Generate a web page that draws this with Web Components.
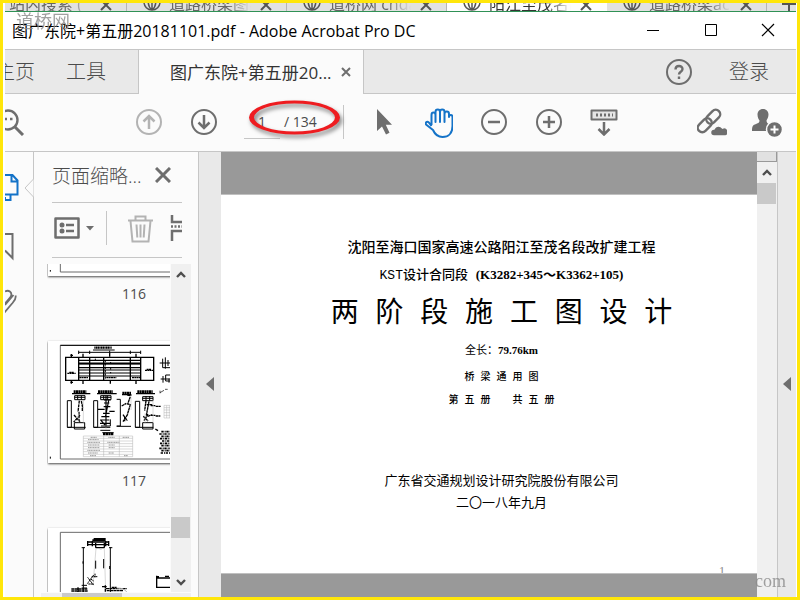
<!DOCTYPE html>
<html lang="zh-CN">
<head>
<meta charset="utf-8">
<title>图广东院+第五册20181101.pdf - Adobe Acrobat Pro DC</title>
<style>
    body {
        margin: 0;
        font-family: "Open Sans", "Noto Sans CJK SC", sans-serif;
        font-size: 16px;
        color: #4b4b4b;
    }
</style>
</head>
<body>
<acrobat-window></acrobat-window>

<script>
function define(name, html, setup) {
    const template = document.createElement("template")
    template.innerHTML = html

    customElements.define(name, class extends HTMLElement {
        constructor() {
            super()
            const shadow = this.attachShadow({mode: "open"})
            shadow.append(template.content.cloneNode(true))
        }

        connectedCallback() {
            if (setup) setup(this, this.shadowRoot)
        }
    })
}

define("icon-button", `
<style>
    :host {
        display: block;
        flex: none;
        width: 28px;
        height: 28px;
        color: #6e6e6e;
    }

    :host([active]) {
        color: #1473c8;
    }

    :host([dim]) {
        color: #b3b3b3;
    }

    button {
        display: block;
        width: 100%;
        height: 100%;
        padding: 0;
        border: 0;
        background: none;
        color: inherit;
    }

    ::slotted(svg) {
        display: block;
        margin: auto;
        fill: none;
        stroke: currentColor;
        stroke-width: 2;
    }
</style>
<button type="button"><slot></slot></button>`, (host, shadow) => {
    shadow.querySelector("button").setAttribute("aria-label", host.getAttribute("label"))
})

define("browser-tab", `
<style>
    :host {
        display: flex;
        flex: none;
        align-items: flex-end;
        box-sizing: border-box;
        width: 160px;
        padding-left: 16px;
        border-right: 1px solid #b5b5b5;
        color: #666;
        line-height: 14px;
        font-size: 16px;
    }

    :host([active]) {
        background: #fdfdfd;
        border-color: #fdfdfd;
        color: #333;
    }

    .globe {
        flex: none;
        width: 18px;
        height: 18px;
        margin-right: 8px;
    }

    .title {
        width: 82px;
        height: 14px;
        white-space: nowrap;
        -webkit-mask-image: linear-gradient(90deg, #000 70%, transparent);
        mask-image: linear-gradient(90deg, #000 70%, transparent);
    }

    .close {
        flex: none;
        width: 12px;
        height: 12px;
        margin-left: 9px;
    }

    svg {
        fill: none;
        stroke: #555;
        stroke-width: 2;
    }
</style>
<svg class="globe" viewBox="0 0 18 18"><path d="M9 1a8 8 0 1 0 0 16a8 8 0 0 0 0-16zM9 1v16M1 9h16M9 1c-5 4-5 12 0 16M9 1c5 4 5 12 0 16" stroke-width="1.5"/></svg>
<span class="title"><slot></slot></span>
<svg class="close" viewBox="0 0 12 12"><path d="M1 1l10 10M11 1L1 11"/></svg>`)

define("browser-strip", `
<style>
    :host {
        display: flex;
        align-items: flex-end;
        height: 8px;
        overflow: hidden;
        background: #e1e1e1;
        border-bottom: 1px solid #2f9155;
    }

    .tabs {
        display: flex;
        flex: 1;
        margin-left: -38px;
    }

    svg {
        flex: none;
        width: 14px;
        height: 14px;
        margin: 4px 0 0 15px;
    }
</style>
<div class="tabs">
    <browser-tab>站内搜索 (</browser-tab>
    <browser-tab>道路桥梁图纸</browser-tab>
    <browser-tab>道桥网 cnda</browser-tab>
    <browser-tab active>阳江至茂名高</browser-tab>
    <browser-tab>道路桥梁ac</browser-tab>
    <svg viewBox="0 0 14 14"><path d="M7 0v14M0 7h14" stroke="#555" stroke-width="2"/></svg>
</div>`)

define("title-bar", `
<style>
    :host {
        display: flex;
        align-items: center;
        height: 35px;
        padding-bottom: 2px;
        background: #fff;
        border-bottom: 1px solid #c6c6c6;
        color: #000;
    }

    h1 {
        flex: 1;
        margin: 0;
        padding-left: 7px;
        font-size: 16px;
        font-weight: 400;
        white-space: nowrap;
    }

    icon-button {
        width: 58px;
        color: #000;
    }

    icon-button:last-child {
        width: 56px;
    }

    svg {
        width: 14px;
        height: 14px;
    }
</style>
<h1><slot></slot></h1>
<icon-button label="最小化"><svg viewBox="0 0 14 14"><path d="M1 7.5h12" stroke-width="1"/></svg></icon-button>
<icon-button label="最大化"><svg viewBox="0 0 14 14"><path d="M1.500 1.500h11v11h-11z" stroke-width="1"/></svg></icon-button>
<icon-button label="关闭"><svg viewBox="0 0 14 14"><path d="M1 1l12 12M13 1L1 13" stroke-width="1.2"/></svg></icon-button>`)

define("tab-bar", `
<style>
    :host {
        display: flex;
        height: 44px;
        background: #e9e9e9;
        font-size: 20px;
        font-weight: 300;
        line-height: 43px;
    }

    a {
        color: #4b4b4b;
        text-decoration: none;
        white-space: nowrap;
    }

    nav {
        display: flex;
        gap: 31px;
        box-sizing: border-box;
        width: 133px;
        overflow: hidden;
        border-bottom: 1px solid #c6c6c6;
    }

    nav a:first-child {
        margin-left: -10px;
    }

    .tab {
        display: flex;
        align-items: center;
        box-sizing: border-box;
        width: 226px;
        padding-left: 31px;
        background: #fbfbfb;
        border: solid #c6c6c6;
        border-width: 0 1px;
        font-size: 17px;
        font-weight: 400;
    }

    .tab a {
        color: #333;
    }

    .rest {
        display: flex;
        flex: 1;
        align-items: center;
        justify-content: flex-end;
        gap: 36px;
        padding-right: 27px;
        border-bottom: 1px solid #c6c6c6;
    }
</style>
<nav><a href="#home">主页</a><a href="#tools">工具</a></nav>
<div class="tab">
    <a href="#file">图广东院+第五册20...</a>
    <icon-button label="关闭标签"><svg width="10" height="10" viewBox="0 0 10 10"><path d="M1 1l8 8M9 1L1 9"/></svg></icon-button>
</div>
<div class="rest">
    <icon-button label="帮助"><svg width="28" height="28" viewBox="0 0 28 28"><circle cx="14" cy="14" r="12"/><path d="M10.500 11.500c0-4.500 7-4.500 7-.5c0 3-3.500 2.500-3.500 5.500M14 18.500v2.500" stroke-width="2.400"/></svg></icon-button>
    <a href="#login">登录</a>
</div>`)

define("page-number", `
<style>
    :host {
        position: relative;
        display: flex;
        align-items: flex-end;
        height: 34px;
        width: 99px;
        border-right: 1px solid #c6c6c6;
        font-size: 14px;
        line-height: 20px;
    }

    input {
        box-sizing: border-box;
        width: 36px;
        height: 34px;
        padding: 0;
        border: 0;
        border-bottom: 1px solid #c6c6c6;
        background: none;
        color: inherit;
        font: inherit;
        text-align: center;
    }

    label {
        padding: 0 0 7px 4px;
        white-space: pre;
    }

    svg {
        position: absolute;
        left: 4px;
        top: -6px;
        pointer-events: none;
        filter: drop-shadow(2px 3px 2px rgba(0, 0, 0, .5));
    }
</style>
<input id="page" value="1">
<label for="page">/ 134</label>
<svg width="94" height="38" viewBox="0 0 94 38"><path fill="#ee1c20" fill-rule="evenodd" d="M1 18.500a45.500 17 0 1 1 91 0a45.500 17 0 1 1-91 0zM6 18.500a40.500 14 0 1 0 81 0a40.500 14 0 1 0-81 0z"/></svg>`)

define("tool-bar", `
<style>
    :host {
        display: flex;
        align-items: center;
        height: 55px;
        padding: 0 16px 2px 0;
        background: #fbfbfb;
        border-bottom: 1px solid #c6c6c6;
    }

    .group {
        display: flex;
        align-items: center;
        gap: 27px;
    }

    .nav {
        margin: 0 26px 0 102px;
    }

    .view {
        flex: 1;
        margin-left: 26px;
    }
</style>
<icon-button label="查找"><svg width="28" height="28" viewBox="0 0 28 28"><circle cx="3" cy="12" r="9.500" stroke-width="2.400"/><path d="M10 19l8 8" stroke-width="3"/><path d="M0 11h2M5 11h2.500" stroke-width="2.500"/></svg></icon-button>
<div class="group nav">
    <icon-button dim label="上一页"><svg width="28" height="28" viewBox="0 0 28 28"><circle cx="14" cy="14" r="12"/><path d="M14 21V8M8.500 13.500L14 8l5.500 5.500" stroke-width="2.500"/></svg></icon-button>
    <icon-button label="下一页"><svg width="28" height="28" viewBox="0 0 28 28"><circle cx="14" cy="14" r="12"/><path d="M14 7v13M8.500 14.500L14 20l5.500-5.500" stroke-width="2.500"/></svg></icon-button>
</div>
<page-number></page-number>
<div class="group view">
    <icon-button label="选择工具"><svg width="28" height="28" viewBox="0 0 28 28"><path d="M7 1v22l5-4.500l4 8l3.500-1.700l-3.700-8H22z" fill="currentColor" stroke="none"/></svg></icon-button>
    <icon-button active label="抓手工具"><svg width="28" height="30" viewBox="0 0 28 30"><path d="M6.500 17V7c0-3.200 4-3.200 4 0v7V4c0-3.200 4.500-3.200 4.500 0v10V4c0-3.200 4.500-3.200 4.500 0v10V6c0-3.200 4.500-3.200 4.500 0v3c0-2.600 3.500-2.600 3.500 0v9c0 7-4 11-10 11c-5 0-7.500-2.500-9.500-7L1 16.500c-1-2.500 1.800-3.600 3.200-1.600L6.500 18" stroke-linejoin="round"/></svg></icon-button>
    <icon-button label="缩小"><svg width="28" height="28" viewBox="0 0 28 28"><circle cx="14" cy="14" r="12"/><path d="M8 14h12" stroke-width="2.500"/></svg></icon-button>
    <icon-button label="放大"><svg width="28" height="28" viewBox="0 0 28 28"><circle cx="14" cy="14" r="12"/><path d="M8 14h12M14 8v12" stroke-width="2.500"/></svg></icon-button>
    <icon-button label="滚动"><svg width="28" height="28" viewBox="0 0 28 28"><path d="M1.500 2.500h25v9h-25z" fill="#e4e4e4" stroke-linejoin="round"/><path d="M6 7h2M10 7h2M14 7h2M18 7h2M22 7h1" stroke-width="3"/><path d="M14 14v12M8.500 21l5.500 5.500l5.500-5.500" stroke-width="2.500"/></svg></icon-button>
</div>
<div class="group">
    <icon-button label="共享链接"><svg width="30" height="28" viewBox="0 0 30 28"><g transform="rotate(-45 12 13)" stroke-width="2.400"><rect x="10" y="8.500" width="16" height="9" rx="4.500"/><rect x="-2" y="8.500" width="16" height="9" rx="4.500"/></g><path d="M17 28a3.500 3.500 0 0 1 0-7a5 5 0 0 1 8.500-1a4 4 0 0 1 3 8z" fill="currentColor" stroke="#fbfbfb" stroke-width="1.500"/></svg></icon-button>
    <icon-button label="添加人员"><svg width="30" height="30" viewBox="0 0 30 30"><path d="M11 1c3.500 0 5.500 2.500 5.500 5.500c0 3-1.500 5-2 6c0 2 1 3 3.500 4v6.500H0c0-5 1-6 4-7c2.500-1 3.500-1.500 3.500-3.500c-.8-1-2-3-2-6C5.500 3.500 7.500 1 11 1z" fill="currentColor" stroke="none"/><circle cx="22.500" cy="21.500" r="8" fill="currentColor" stroke="#fbfbfb" stroke-width="1.500"/><path d="M18.500 21.500h8M22.500 17.500v8" stroke="#fff"/></svg></icon-button>
</div>`)

define("side-rail", `
<style>
    :host {
        position: relative;
        display: flex;
        flex: none;
        flex-direction: column;
        gap: 28px;
        box-sizing: border-box;
        width: 29px;
        padding-top: 21px;
        background: #fbfbfb;
        border-right: 1px solid #c6c6c6;
    }

    icon-button {
        height: 30px;
    }

    .notch {
        position: absolute;
        right: -1px;
        top: 27px;
    }
</style>
<icon-button active label="页面缩略图"><svg width="28" height="30" viewBox="0 0 28 30"><path d="M-3 2H7.500L12.500 7.500V21.500H-3M6.500 2v6.500h6M5.500 22v5H0M0 24v4"/></svg></icon-button>
<icon-button label="书签"><svg width="28" height="30" viewBox="0 0 28 30"><path d="M0 3h7.500v24L0 19.500"/></svg></icon-button>
<icon-button label="附件"><svg width="28" height="30" viewBox="0 0 28 30"><path d="M0 2.500c3.500-2 7.500.5 6 4.500c-.5 1.500-2 3-6 7.500M10.500 6.500c1 3-1 5-3 7.500L-1 24M8.500 6L0 16" stroke-width="1.800"/></svg></icon-button>
<svg class="notch" width="10" height="18" viewBox="0 0 10 18"><path d="M9.500 0L1 9l8.500 9" fill="#fbfbfb" stroke="#c6c6c6"/></svg>`)

define("scroll-bar", `
<style>
    :host {
        display: flex;
        flex: none;
        flex-direction: column;
        width: 20px;
        background: #f0f0f0;
        overflow: hidden;
    }

    icon-button {
        width: 20px;
        height: 21px;
        color: #4e4e4e;
    }

    .track {
        display: flex;
        flex: 1;
        flex-direction: column;
    }

    .track::before {
        content: "";
        flex: var(--before, 0);
    }

    .track::after {
        content: "";
        flex: 1;
    }

    .thumb {
        height: 21px;
        margin-right: 1px;
        background: #c9c9c9;
    }

    :host([cut]) .down {
        display: none;
    }
</style>
<slot></slot>
<icon-button label="向上滚动"><svg width="12" height="12" viewBox="0 0 12 12"><path d="M2 8l4-4l4 4" stroke-width="2.400"/></svg></icon-button>
<div class="track"><div class="thumb"></div></div>
<icon-button class="down" label="向下滚动"><svg width="12" height="12" viewBox="0 0 12 12"><path d="M2 4l4 4l4-4" stroke-width="2.400"/></svg></icon-button>`)

define("page-thumb", `
<style>
    :host {
        display: block;
        height: 187px;
        text-align: center;
        font-size: 14px;
        line-height: 20px;
    }

    .sheet {
        height: 122px;
        margin-bottom: 8px;
        background: #fff;
        box-shadow: 0 1px 2px rgba(0, 0, 0, .7);
    }

    ::slotted(svg) {
        display: block;
        width: 172px;
        height: 122px;
    }
</style>
<div class="sheet"><slot></slot></div>
<span></span>`, (host, shadow) => {
    shadow.querySelector("span").textContent = host.getAttribute("number")
})

// the drawings use three units to the pixel
define("thumb-list", `
<style>
    :host {
        display: flex;
        flex: 1;
        min-height: 0;
        margin: 0 7px 0 13px;
    }

    .view {
        flex: 1;
        overflow: hidden;
        padding-left: 1px;
        margin-right: 1px;
    }

    .pages {
        width: 172px;
        margin-top: -110px;
    }

    scroll-bar {
        --before: 7;
    }

    .line {
        fill: none;
        stroke: #000;
        stroke-width: 3;
    }

    .frame {
        fill: none;
        stroke: #6a6a6a;
        stroke-width: 3;
    }

    .faint {
        fill: none;
        stroke: #b0b0b0;
        stroke-width: 1.500;
    }
</style>
<div class="view">
    <div class="pages">
        <page-thumb number="116">
            <svg viewBox="144 123 516 366"><path class="frame" d="M181 136H640V477H181z"/><path class="line" d="M151 471v5"/></svg>
        </page-thumb>
        <page-thumb number="117">
            <svg viewBox="144 123 516 366">
                <path class="frame" d="M181 136H640V477H181z"/>
                <path class="line" d="M181 136H640M151 470v6"/>
                <path class="line" stroke-dasharray="4 1" style="stroke-width:7" d="M283 143h52"/>
                <path class="line" d="M279 150h65M236 157h186M236 152v10M269 152v10M391 152v10M422 152v10M329 152v10"/>
                <path class="line" d="M197 172H461V241H197zM236 172v69M269 172v69M311 172v69M391 172v69M422 172v69" style="stroke-width:4"/>
                <path class="line" d="M236 181H422M236 192H422M236 203H422M236 210H422M236 219H422M236 228H422" style="stroke-width:3.500"/>
                <path class="line" d="M236 190H422" style="stroke-width:5"/>
                <path class="line" d="M316 180v56M332 186v6M332 204v5M332 216v4M286 176v8" stroke-dasharray="7 3"/>
                <path class="line" d="M202 220h25M208 217h14M435 211h24M440 208h14M238 233h26M319 233h30M396 233h24" stroke-dasharray="6 1" style="stroke-width:4"/>
                <path class="line" d="M214 162v9M211 166h8M249 161v10M408 161v10M329 160v10M214 241v10M211 247h8M249 242v10M408 242v10M331 242v9" style="stroke-width:4"/>
                <path class="line" d="M479 189h32M488 176v27M496 172v34M488 203h22M504 180v18M482 237h29M489 228v20M497 225v18h14M497 225h14M507 236v12" style="stroke-width:3"/>
                <path class="line" d="M480 272v8M480 278l12-7M495 268h8" style="stroke-width:2"/>
                <path class="line" d="M216 281h55M291 281h59M366 284h28M408 281h57" style="stroke-width:4"/>
                <path class="line" d="M221 275h38M294 275h44M367 279h26M412 275h46" stroke-dasharray="6 1" style="stroke-width:8"/>
                <path class="line" d="M224 287v12h31v-12zM302 287v12h31v-12zM428 290v12h31v-12zM224 292h31M302 292h31M428 295h31M233 287v12M244 287v12M311 287v12M323 287v12M438 288v14M449 288v14"/>
                <path class="line" d="M202 302h12v80h-12zM281 302h12v80h-12zM350 298h11v80h-11M406 304h13v78h-13z"/>
                <path class="line" d="M202 382h55M223 368h31v19h-31zM281 382h50M303 378h28v-20M350 379h43M406 382h54M428 368h31v19h-31z"/>
                <path class="line" d="M238 302l-4 34M247 313v22M237 335v28M222 345l18 20M240 346l-19 20M244 303l4 20" stroke-dasharray="9 2" style="stroke-width:4"/>
                <path class="line" d="M318 287v94M312 300h20M312 309h16M311 320h20M294 328h20M328 334h16M309 340h20M304 350h24M302 360h26M300 370h30M326 302l-10 50M301 359l14 16" style="stroke-width:3.500"/>
                <path class="line" d="M391 290l-8 22l8 2l-9 30M365 318l14-8M369 344l13 18M383 343l-14 22M374 350v14M382 286h12" stroke-dasharray="9 1" style="stroke-width:4"/>
                <path class="line" d="M438 302l-4 30M447 304l-8 42M430 349l14 14M444 342l-12 20M440 314h17M443 349l14-5M467 319h15M467 348h14M452 346h14M452 317h14" stroke-dasharray="8 1" style="stroke-width:4"/>
                <path class="faint" d="M235 337v30M250 300v72M318 375v13M435 340v30M459 300v70M393 290v40"/>
                <path class="line" d="M301 391h30M307 398h34" style="stroke-width:3"/>
                <path class="line" d="M309 402h32" stroke-dasharray="7 1" style="stroke-width:8"/>
                <path class="faint" d="M250 408H398V470H250zM311 408v62M358 408v62M250 415H398M250 423H398M250 431H398M250 439H398M250 447H398M250 455H398M250 463H398"/>
                <path class="frame" d="M272 412h18M325 412h20M368 412h20M264 419h32M262 427h38M264 435h34M264 443h34M262 451h38M264 459h30M270 467h18M322 427h36M326 435h18M326 443h18M326 459h16M372 467h12" stroke-dasharray="4 1" style="stroke-width:2"/>
                <path class="faint" d="M492 316h30v38h-30zM492 323h30M492 330h30M492 338h30M492 346h30M500 316v38M508 316v38"/>
                <path class="line" d="M484 395h40M478 402h44M484 409h38M480 416h42M486 423h38M480 430h42M484 437h40M478 445h44M484 452h38M482 459h40" stroke-dasharray="7 3 3 2" style="stroke-width:5"/>
                <path class="line" d="M466 387l8 5" style="stroke-width:4"/>
            </svg>
        </page-thumb>
        <page-thumb number="118">
            <svg viewBox="144 204 516 366">
                <path class="frame" d="M181 217H640V558H181z"/>
                <path class="line" d="M281 237h36M277 241h40" style="stroke-width:6"/>
                <path class="line" d="M262 246h64M262 254h64M263 243v15M326 243v15M277 243v16M317 243v16M287 249v14M313 249v14M287 263h26" style="stroke-width:4"/>
                <path class="line" d="M250 262v134M245 263h10M331 262v134M327 263h10M245 376h16M245 384h16"/>
                <path class="faint" d="M288 265l-9 110M313 265l4 130M297 264l5 6l6-6"/>
                <path class="line" d="M287 302v24M311 297v28M249 304v7M329 318v9" style="stroke-width:3"/>
                <path class="line" d="M263 352l18 24M281 345l-19 26M272 357l9 6M285 341v12M265 372h16M275 350h18" style="stroke-width:3" stroke-dasharray="5 1"/>
                <path class="line" d="M214 387h48M214 393h50M234 382v14M316 376v20M306 380h14M318 386h62M335 382h15M320 392h50" style="stroke-width:4" stroke-dasharray="9 1"/>
                <path class="faint" d="M350 384c15 0 26 4 30 12M230 400h60" style="stroke-width:3"/>
                <path class="line" d="M469 354h50M470 347v35h49M469 350h8M495 349h12" style="stroke-width:4"/>
            </svg>
        </page-thumb>
    </div>
</div>
<scroll-bar></scroll-bar>`)

define("thumbs-pane", `
<style>
    :host {
        display: flex;
        flex: none;
        flex-direction: column;
        box-sizing: border-box;
        width: 165px;
        background: #fbfbfb;
        border-right: 1px solid #c6c6c6;
    }

    header, .tools {
        display: flex;
        align-items: center;
        flex: none;
        margin: 0 16px 0 18px;
        padding-bottom: 4px;
        border-bottom: 1px solid #c6c6c6;
        overflow: hidden;
    }

    header {
        height: 46px;
        justify-content: space-between;
    }

    h2 {
        margin: 0;
        font-size: 19px;
        font-weight: 300;
        white-space: nowrap;
    }

    header icon-button {
        margin-right: 5px;
    }

    .tools {
        height: 50px;
        margin-bottom: 6px;
    }

    .options {
        width: 44px;
    }

    .delete {
        box-sizing: border-box;
        height: 34px;
        width: 54px;
        margin-left: 10px;
        padding: 2px 0 0 14px;
        border-left: 1px solid #c6c6c6;
    }

    .insert {
        margin-left: 10px;
    }

    .across {
        height: 4px;
        margin: 1px 7px 0;
        background: #f0f0f0;
    }

    .across div {
        width: 60px;
        height: 4px;
        margin-left: 21px;
        background: #c9c9c9;
    }
</style>
<header>
    <h2>页面缩略...</h2>
    <icon-button label="关闭面板"><svg width="16" height="16" viewBox="0 0 16 16"><path d="M1 1l14 14M15 1L1 15" stroke-width="3"/></svg></icon-button>
</header>
<div class="tools">
    <icon-button class="options" label="选项"><svg width="44" height="28" viewBox="0 0 44 28"><path d="M3.500 4.500h23v19h-23z" stroke-width="2.500" stroke-linejoin="round"/><path d="M14 11h8M14 17h8" stroke-width="2.400"/><circle cx="10" cy="11" r="2.500" fill="currentColor" stroke="none"/><circle cx="10" cy="17" r="2.500" fill="currentColor" stroke="none"/><path d="M34 12h8l-4 4.500z" fill="currentColor" stroke="none"/></svg></icon-button>
    <icon-button dim class="delete" label="删除页面"><svg width="28" height="28" viewBox="0 0 28 28"><path d="M1 5.500h25M8.500 5V1.500h10V5M3.500 6l2 20.500h16l2-20.500"/><path d="M9.500 9.500l.8 13M13.500 9.500v13M17.500 9.500l-.8 13"/></svg></icon-button>
    <icon-button class="insert" label="插入页面"><svg width="28" height="28" viewBox="0 0 28 28"><path d="M2 1v7h26M2 27V17h26" stroke-width="2.500"/><path d="M1 12.500h26" stroke-width="2.500" stroke-dasharray="2 1.500"/></svg></icon-button>
</div>
<thumb-list></thumb-list>
<div class="across"><div></div></div>`)

define("pane-toggle", `
<style>
    :host {
        display: flex;
        flex: none;
        align-items: center;
        justify-content: center;
        box-sizing: border-box;
        width: 22px;
        padding-top: 18px;
        background: #e9e9e9;
    }

    :host([last]) {
        width: 19px;
        border-left: 1px solid #c6c6c6;
    }

    icon-button {
        width: 100%;
    }
</style>
<icon-button label="显示或隐藏面板"><svg width="8" height="14" viewBox="0 0 8 14"><path d="M8 0v14L0 7z" fill="currentColor" stroke="none"/></svg></icon-button>`)

define("document-page", `
<style>
    :host {
        position: relative;
        display: flex;
        flex: 1;
        flex-direction: column;
        align-items: center;
        min-height: 0;
        padding-left: 25px;
        background: #fff;
        border: solid #c0c0c0;
        border-width: 1px 0;
        color: #000;
        font-family: "Liberation Mono", "Noto Sans CJK SC", monospace;
        overflow: hidden;
        white-space: pre;
    }

    p, h1 {
        margin: 0;
        font-size: 13px;
        font-weight: 400;
        line-height: 20px;
    }

    b {
        font-family: "Liberation Serif", "Noto Sans CJK SC", serif;
    }

    .project, .section {
        font-weight: 500;
    }

    .project {
        margin-top: 43px;
        font-size: 14px;
    }

    .section {
        margin-top: 7px;
    }

    h1 {
        margin: 8px 0 4px;
        font-size: 28px;
        line-height: 42px;
    }

    .small {
        font-size: 11px;
    }

    .spaced {
        margin-top: 7px;
        font-size: 10px;
        font-weight: 500;
    }

    .spaced + .spaced {
        margin-top: 3px;
    }

    .company {
        margin: 61px 0 2px;
    }

    .folio {
        position: absolute;
        right: 32px;
        bottom: -8px;
        color: #888;
        font-family: "Liberation Serif", serif;
        font-size: 12px;
        line-height: 20px;
    }
</style>
<p class="project">沈阳至海口国家高速公路阳江至茂名段改扩建工程</p>
<p class="section">KST设计合同段 <b>(K3282+345～K3362+105)</b></p>
<h1>两 阶 段 施 工 图 设 计</h1>
<p class="small">全长：<b>79.76km</b></p>
<p class="spaced">桥 梁 通 用 图</p>
<p class="spaced">第 五 册 　 共 五 册</p>
<p class="company">广东省交通规划设计研究院股份有限公司</p>
<p>二〇一八年九月</p>
<span class="folio">1</span>`)

define("acrobat-window", `
<style>
    :host {
        position: relative;
        display: flex;
        flex-direction: column;
        box-sizing: border-box;
        height: 100vh;
        padding: 0 1px 0 2px;
        border: 3px solid #ffe60a;
        background: #fff;
        overflow: hidden;
    }

    browser-strip, title-bar, tab-bar, tool-bar {
        flex: none;
    }

    main {
        display: flex;
        flex: 1;
        min-height: 0;
    }

    .desk {
        display: flex;
        flex: 1;
        flex-direction: column;
        min-width: 0;
        padding: 42px 0 23px;
        background: #999;
    }

    .split {
        flex: none;
        height: 9px;
        border: solid #999;
        border-width: 0 1px 1px 0;
        background: #e1e1e1;
    }

    .mark {
        position: absolute;
        color: #8a8a8a;
        opacity: .8;
        white-space: nowrap;
    }

    .name {
        left: 13px;
        top: 7px;
        font-size: 18px;
        line-height: 22px;
    }

    .site {
        right: 11px;
        bottom: 5px;
        font: 18px/22px "Liberation Serif", serif;
    }
</style>
<browser-strip></browser-strip>
<title-bar>图广东院+第五册20181101.pdf - Adobe Acrobat Pro DC</title-bar>
<tab-bar></tab-bar>
<tool-bar></tool-bar>
<main>
    <side-rail></side-rail>
    <thumbs-pane></thumbs-pane>
    <pane-toggle></pane-toggle>
    <div class="desk"><document-page></document-page></div>
    <scroll-bar cut><div class="split"></div></scroll-bar>
    <pane-toggle last></pane-toggle>
</main>
<span class="mark name">道桥网</span>
<span class="mark site">com</span>`)
</script>
</body>
</html>
